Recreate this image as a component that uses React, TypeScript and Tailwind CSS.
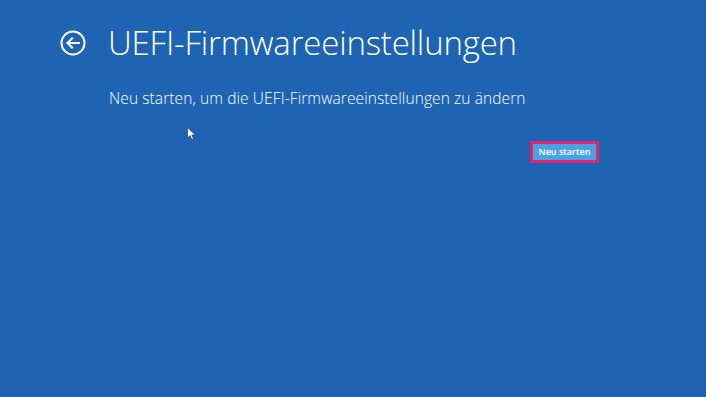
import React from 'react';

const BackIcon = () => (
  <svg width="26" height="26" viewBox="0 0 26 26" fill="none" stroke="white" strokeWidth="2">
    <circle cx="13" cy="13" r="11.5" />
    <path d="M19 13H7.5M12 8.5L7.5 13l4.5 4.5" strokeLinecap="square" />
  </svg>
);

const Cursor = () => (
  <svg width="10" height="14" viewBox="0 0 10 14" className="absolute left-[187px] top-[127px]">
    <path d="M0.5 0.5V11l2.6-2.4 1.8 4.2 1.7-0.8-1.8-4h3.6z" fill="white" stroke="#2a3a55" strokeWidth="0.7" />
  </svg>
);

const App = () => {
  return (
    <div className="relative w-[706px] h-[397px] overflow-hidden bg-[#1e64b2] text-white font-['Open_Sans',sans-serif]">
      {/* Header */}
      <div className="flex items-center pl-[60px] pt-[23px] gap-[22px]">
        <BackIcon />
        <h1 className="text-[33px] font-light leading-[40px] tracking-[-0.2px]">UEFI-Firmwareeinstellungen</h1>
      </div>

      {/* Content */}
      <div className="pl-[109px] pt-[24px]">
        <p className="text-[15.5px] font-light leading-[22px] tracking-[0.1px]">
          Neu starten, um die UEFI-Firmwareeinstellungen zu ändern
        </p>
        <div className="pl-[421px] pt-[28px]">
          <button className="w-[69px] h-[22px] border-[3px] border-[#e5216f] bg-[#4aa3e0] text-[9px] font-semibold leading-none">
            Neu starten
          </button>
        </div>
      </div>

      <Cursor />
    </div>
  );
};

export default App;
